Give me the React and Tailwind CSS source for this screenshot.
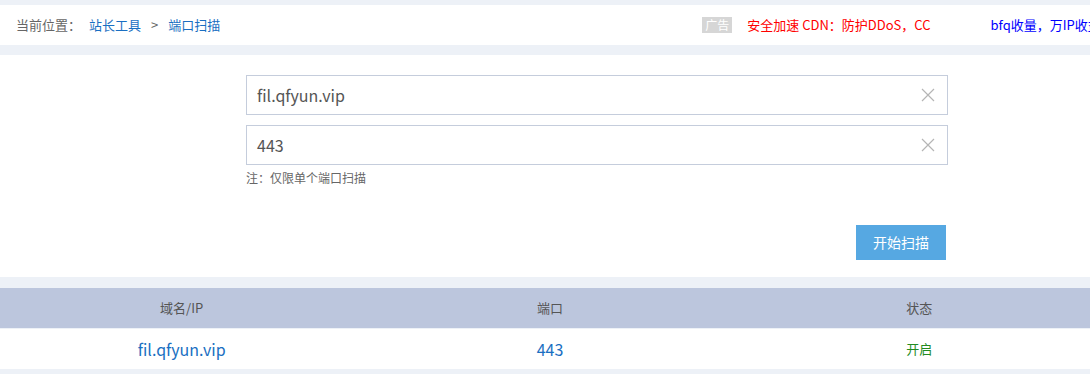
import React from "react";

const font = { fontFamily: '"Microsoft YaHei", "Noto Sans CJK SC", "Liberation Sans", sans-serif' };

function ClearIcon() {
    return (
        <svg width="14" height="14" viewBox="0 0 14 14" className="shrink-0">
            <path d="M1 1L13 13M13 1L1 13" stroke="#b5b5b5" strokeWidth="1.2" fill="none" />
        </svg>
    );
}

function Field({ value }) {
    return (
        <div className="flex items-center h-10 border border-[#c5cddc] bg-white pl-[10px] pr-[12px]">
            <span className="flex-1 text-[16px] text-[#555]">{value}</span>
            <ClearIcon />
        </div>
    );
}

export default function App() {
    return (
        <div className="w-[1090px] h-[374px] overflow-hidden bg-[#edf1f7]" style={font}>
            {/* Breadcrumb bar */}
            <div className="mt-[5px] h-10 bg-white flex items-center text-[13px] whitespace-nowrap overflow-hidden">
                <span className="ml-4 text-[#666]">当前位置：</span>
                <span className="ml-[8px] text-[#1a6fc2]">站长工具</span>
                <span className="ml-[10px] text-[#666]">&gt;</span>
                <span className="ml-[10px] text-[#1a6fc2]">端口扫描</span>
                <span className="ml-[482px] bg-[#d6d6d6] text-white text-[12px] px-[3px] leading-[16px]">广告</span>
                <span className="ml-[15px] text-[#ff0000]">安全加速 CDN：防护DDoS，CC</span>
                <span className="ml-[60px] text-[#0000ff]">bfq收量，万IP收益</span>
            </div>

            {/* Form */}
            <div className="mt-[10px] h-[222px] bg-white pt-5">
                <div className="ml-[246px] w-[702px] flex flex-col">
                    <Field value="fil.qfyun.vip" />
                    <div className="mt-[10px]">
                        <Field value="443" />
                    </div>
                    <p className="mt-[4px] text-[12px] text-[#666]">注：仅限单个端口扫描</p>
                    <div className="mt-[38px] flex justify-end pr-[2px]">
                        <button className="w-[90px] h-[35px] bg-[#56a8e2] text-white text-[14px]">开始扫描</button>
                    </div>
                </div>
            </div>

            {/* Result table */}
            <div className="mt-[11px] grid grid-cols-3 h-[40px] bg-[#bcc6dd] items-center text-center text-[13px] text-[#555]">
                <span>域名/IP</span>
                <span className="pl-[10px]">端口</span>
                <span className="pl-[22px]">状态</span>
            </div>
            <div className="mt-px grid grid-cols-3 h-[40px] bg-white items-center text-center">
                <span className="text-[16px] text-[#1a6fc2]">fil.qfyun.vip</span>
                <span className="pl-[10px] text-[16px] text-[#1a6fc2]">443</span>
                <span className="pl-[22px] text-[13px] text-[#228b22]">开启</span>
            </div>
        </div>
    );
}
